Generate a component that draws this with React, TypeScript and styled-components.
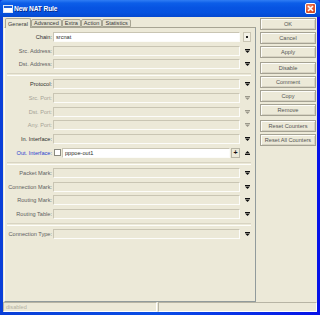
import React from 'react';
import styled, {createGlobalStyle} from "styled-components";

const GlobalStyle = createGlobalStyle`
  html, body {
    margin: 0;
    padding: 0;
    background: #0a3fd8;
  }
  body {
    font-family: "Liberation Sans", Arial, sans-serif;
  }
`

type Arrow = 'down' | 'downGray' | 'up' | 'none';

type FieldRow = {
    label: string;
    tone: 'dark' | 'mid' | 'off' | 'link';
    white?: boolean;
    arrow: Arrow;
    dotButton?: boolean;
    check?: boolean;
    plus?: boolean;
    value?: string;
};

const groups: FieldRow[][] = [
    [
        {label: "Chain:", tone: 'dark', white: true, value: "srcnat", arrow: 'none', dotButton: true},
        {label: "Src. Address:", tone: 'mid', arrow: 'down'},
        {label: "Dst. Address:", tone: 'mid', arrow: 'down'},
    ],
    [
        {label: "Protocol:", tone: 'dark', arrow: 'down'},
        {label: "Src. Port:", tone: 'off', arrow: 'downGray'},
        {label: "Dst. Port:", tone: 'off', arrow: 'downGray'},
        {label: "Any. Port:", tone: 'off', arrow: 'downGray'},
        {label: "In. Interface:", tone: 'dark', arrow: 'down'},
        {label: "Out. Interface:", tone: 'link', white: true, check: true, plus: true, value: "pppoe-out1", arrow: 'up'},
    ],
    [
        {label: "Packet Mark:", tone: 'mid', arrow: 'down'},
        {label: "Connection Mark:", tone: 'mid', arrow: 'down'},
        {label: "Routing Mark:", tone: 'mid', arrow: 'down'},
        {label: "Routing Table:", tone: 'mid', arrow: 'down'},
    ],
    [
        {label: "Connection Type:", tone: 'mid', arrow: 'down'},
    ],
];

const tabs = ["General", "Advanced", "Extra", "Action", "Statistics"];

const buttons: { text: string; gap?: boolean }[] = [
    {text: "OK"},
    {text: "Cancel"},
    {text: "Apply"},
    {text: "Disable", gap: true},
    {text: "Comment"},
    {text: "Copy"},
    {text: "Remove"},
    {text: "Reset Counters", gap: true},
    {text: "Reset All Counters"},
];

function ArrowIcon({kind}: { kind: Arrow }) {
    if (kind === 'none') return null;
    const c = kind === 'downGray' ? '#9a978a' : '#111';
    if (kind === 'up') {
        return <svg width="5" height="4" viewBox="0 0 5 4">
            <polygon points="2.5,0 5,2.5 0,2.5" fill={c}/>
            <rect x="0" y="3" width="5" height="1" fill={c}/>
        </svg>
    }
    return <svg width="5" height="4" viewBox="0 0 5 4">
        <rect x="0" y="0" width="5" height="1" fill={c}/>
        <polygon points="0,1.5 5,1.5 2.5,4" fill={c}/>
    </svg>
}

export default function App() {
    return <>
        <GlobalStyle/>
        <Window>
            <TitleBar>
                <svg width="10" height="8" viewBox="0 0 10 8">
                    <rect x="0.5" y="0.5" width="9" height="7" fill="#fff" stroke="#dfe8f8"/>
                    <rect x="1" y="1" width="8" height="2" fill="#1d5fd8"/>
                </svg>
                <Title>New NAT Rule</Title>
                <CloseButton>
                    <svg width="7" height="7" viewBox="0 0 7 7">
                        <path d="M1 1 L6 6 M6 1 L1 6" stroke="#fff" strokeWidth="1.6"/>
                    </svg>
                </CloseButton>
            </TitleBar>

            <Body>
                <Main>
                    <Left>
                        <TabStrip>
                            {tabs.map(t => <Tab key={t} $active={t === "General"}>{t}</Tab>)}
                        </TabStrip>
                        <Panel>
                            {groups.map((g, gi) => <React.Fragment key={gi}>
                                {gi > 0 && <Separator/>}
                                <Group>
                                    {g.map(r => <Row key={r.label}>
                                        <Label $tone={r.tone}>{r.label}</Label>
                                        {r.check && <CheckBox/>}
                                        <Field $white={!!r.white} $short={!!r.check}>{r.value}</Field>
                                        {r.plus && <PlusButton>+</PlusButton>}
                                        <ArrowSlot>
                                            {r.dotButton ? <DotButton><i/></DotButton> : <ArrowIcon kind={r.arrow}/>}
                                        </ArrowSlot>
                                    </Row>)}
                                </Group>
                            </React.Fragment>)}
                        </Panel>
                    </Left>

                    <Side>
                        {buttons.map(b => <SideButton key={b.text} $gap={!!b.gap}>{b.text}</SideButton>)}
                    </Side>
                </Main>

                <StatusBar>
                    <StatusField $grow={false}>disabled</StatusField>
                    <StatusField $grow={true}/>
                </StatusBar>
            </Body>
        </Window>
    </>
}


const Window = styled.div`
  width: 320px;
  height: 315px;
  box-sizing: border-box;
  display: flex;
  flex-direction: column;
  padding: 0 3px 3px 3px;
  background: linear-gradient(90deg, #0a3fd8 0%, #0a3fd8 2%, #0a4ee6 50%, #0612e8 100%);
  overflow: hidden;
`

const TitleBar = styled.div`
  height: 17px;
  margin: 0 -3px;
  padding: 0 4px 0 3px;
  display: flex;
  align-items: center;
  gap: 1px;
  background: linear-gradient(180deg, #2f7df4 0%, #0c5ee8 18%, #0754e2 45%, #0552df 75%, #0448d0 100%);
  border-radius: 4px 4px 0 0;
`

const Title = styled.div`
  flex: 1;
  color: #fff;
  font-weight: bold;
  font-size: 6.6px;
  letter-spacing: -0.1px;
  text-shadow: 1px 1px 0 #0a2a88;
  margin-top: -1px;
`

const CloseButton = styled.div`
  width: 11px;
  height: 11px;
  box-sizing: border-box;
  border: 1px solid #fff;
  border-radius: 2px;
  display: flex;
  align-items: center;
  justify-content: center;
  background: radial-gradient(circle at 35% 30%, #f08a6a 0%, #e0542c 55%, #c8401c 100%);
`

const Body = styled.div`
  flex: 1;
  display: flex;
  flex-direction: column;
  background: #ece9d8;
  color: #333;
`

const Main = styled.div`
  flex: 1;
  display: flex;
`

const Left = styled.div`
  width: 252px;
  margin-left: 1px;
  display: flex;
  flex-direction: column;
`

const TabStrip = styled.div`
  display: flex;
  align-items: flex-end;
  height: 10px;
  padding-left: 1px;
  position: relative;
  z-index: 1;
`

const Tab = styled.div<{ $active: boolean }>`
  height: ${p => p.$active ? 10 : 8}px;
  margin-bottom: ${p => p.$active ? -1 : 0}px;
  box-sizing: border-box;
  padding: 0 2px;
  display: flex;
  align-items: center;
  font-size: 5.6px;
  color: #3a3a3a;
  background: ${p => p.$active ? '#ece9d8' : '#e4e1d0'};
  border: 1px solid #a7a493;
  border-bottom: ${p => p.$active ? 'none' : '1px solid #a7a493'};
  border-radius: 2px 2px 0 0;
`

const Panel = styled.div`
  flex: 1;
  box-sizing: border-box;
  border: 1px solid #919b9c;
  border-left-color: #fbfbf8;
  border-top-color: #a7a493;
  padding: 4px 0 0 0;
`

const Group = styled.div`
  display: flex;
  flex-direction: column;
  gap: 3.7px;
`

const Separator = styled.div`
  height: 1px;
  margin: 4px 4px 3px 2px;
  border-top: 1px solid #d8d4c2;
  border-bottom: 1px solid #fdfdf9;
`

const Row = styled.div`
  height: 10px;
  display: flex;
  align-items: center;
`

const toneColor = {
    dark: '#2e2e2e',
    mid: '#606060',
    off: '#a5a295',
    link: '#2b3fd0',
};

const Label = styled.div<{ $tone: keyof typeof toneColor }>`
  width: 47px;
  text-align: right;
  font-size: 5.6px;
  white-space: nowrap;
  color: ${p => toneColor[p.$tone]};
`

const CheckBox = styled.div`
  width: 7px;
  height: 7px;
  box-sizing: border-box;
  margin-left: 2px;
  background: #fff;
  border: 1px solid #8a8a80;
`

const Field = styled.div<{ $white: boolean; $short: boolean }>`
  width: ${p => p.$short ? 168 : 187}px;
  height: 10px;
  box-sizing: border-box;
  margin-left: 1px;
  padding-left: 2px;
  display: flex;
  align-items: center;
  font-size: 5.6px;
  color: #2a2a2a;
  background: ${p => p.$white ? '#fff' : '#ece9d8'};
  border: 1px solid #fcfcf9;
  border-top-color: #c9c5b3;
  border-left-color: #c9c5b3;
`

const PlusButton = styled.div`
  width: 9px;
  height: 10px;
  box-sizing: border-box;
  margin-left: 1px;
  display: flex;
  align-items: center;
  justify-content: center;
  font-size: 7px;
  font-weight: bold;
  line-height: 1;
  color: #111;
  border: 1px solid #b9b6a6;
  background: #ece9d8;
`

const ArrowSlot = styled.div`
  width: 14px;
  display: flex;
  justify-content: center;
  align-items: center;
`

const DotButton = styled.div`
  width: 8px;
  height: 10px;
  box-sizing: border-box;
  border: 1px solid #c9c5b3;
  background: #f3f1e6;
  display: flex;
  align-items: center;
  justify-content: center;

  i {
    width: 2px;
    height: 2px;
    background: #222;
  }
`

const Side = styled.div`
  width: 56px;
  margin-left: 4px;
  padding-top: 1px;
  display: flex;
  flex-direction: column;
  gap: 2px;
`

const SideButton = styled.div<{ $gap: boolean }>`
  height: 12px;
  box-sizing: border-box;
  margin-top: ${p => p.$gap ? 2 : 0}px;
  display: flex;
  align-items: center;
  justify-content: center;
  font-size: 5.6px;
  color: #555;
  background: #ece9d8;
  border: 1px solid #a5a293;
  box-shadow: inset 1px 1px 0 #fdfdfa, inset -1px -1px 0 #d6d2c2;
`

const StatusBar = styled.div`
  height: 10px;
  display: flex;
  gap: 1px;
`

const StatusField = styled.div<{ $grow: boolean }>`
  width: ${p => p.$grow ? 'auto' : '154px'};
  flex: ${p => p.$grow ? 1 : 'none'};
  box-sizing: border-box;
  padding-left: 2px;
  display: flex;
  align-items: center;
  font-size: 5.6px;
  color: #b3b0a2;
  border: 1px solid #fff;
  border-top-color: #b7b4a4;
  border-left-color: #b7b4a4;
`
